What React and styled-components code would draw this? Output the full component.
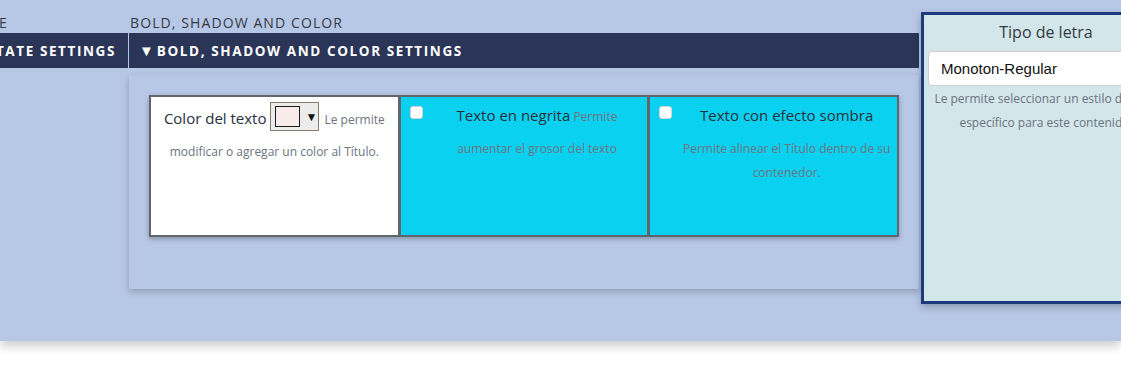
import React from "react";
import styled, { createGlobalStyle } from "styled-components";

const Global = createGlobalStyle`
  html, body { margin: 0; padding: 0; background: #ffffff; }
  body { font-family: "Open Sans", "Noto Sans", sans-serif; color: #2b313b; }
  * { box-sizing: border-box; }
`;

const Page = styled.div`
  padding-bottom: 32px;
`;

const Stage = styled.div`
  height: 341px;
  background: #b7c8e6;
  box-shadow: 0 5px 10px rgba(0, 0, 0, 0.2);
  overflow: hidden;
  display: flex;
  align-items: flex-start;
  gap: 1px;
`;

const Slide = styled.section`
  flex: 0 0 ${(p) => p.$width}px;
  width: ${(p) => p.$width}px;
  padding-top: 13px;
  display: flex;
  flex-direction: column;
`;

const SlideLabel = styled.div`
  height: 20px;
  line-height: 20px;
  font-size: 14px;
  letter-spacing: 1.1px;
  color: #343a44;
  white-space: nowrap;
  display: flex;
  justify-content: ${(p) => (p.$edge === "end" ? "flex-end" : "flex-start")};
  padding: ${(p) => (p.$edge === "end" ? "0 120px 0 0" : "0 0 0 1px")};
`;

const Bar = styled.div`
  height: 35px;
  background: #2a3558;
  color: #ffffff;
  display: flex;
  align-items: center;
  justify-content: ${(p) => (p.$edge === "end" ? "flex-end" : "flex-start")};
  padding: ${(p) => (p.$edge === "end" ? "0 12px 0 0" : "0 0 0 10px")};
  font-size: 13.5px;
  font-weight: 700;
  letter-spacing: 1.6px;
  white-space: nowrap;
  overflow: hidden;
`;

const Caret = styled.span`
  font-size: 15px;
  margin-right: 3px;
  letter-spacing: 0;
  line-height: 1;
`;

const Panel = styled.div`
  margin-top: 7px;
  height: 214px;
  padding: 20px;
  background: #b7c8e6;
  box-shadow: 0 3px 7px rgba(0, 0, 0, 0.22);
`;

const Row = styled.div`
  display: grid;
  grid-template-columns: repeat(3, 1fr);
  gap: 3px;
  padding: 2px;
  height: 142px;
  background: #60656f;
  box-shadow: 0 2px 5px rgba(0, 0, 0, 0.28);
`;

const Cell = styled.div`
  background: ${(p) => p.$bg};
  display: flex;
  align-items: flex-start;
  padding: ${(p) => (p.$check ? "9px 0 0 9px" : "5px 0 0 0")};
`;

const Check = styled.input.attrs({ type: "checkbox" })`
  appearance: none;
  flex: 0 0 13px;
  width: 13px;
  height: 13px;
  margin: 0 4px 0 0;
  background: #ffffff;
  border: 1px solid #d4d4d4;
  border-radius: 3px;
`;

const Text = styled.p`
  flex: 1;
  margin: ${(p) => (p.$check ? "-3px 0 0" : "0")};
  padding: ${(p) => (p.$check ? "0 4px" : "0")};
  text-align: center;
  line-height: 24px;
  font-size: 12px;
`;

const Title = styled.span`
  display: inline-block;
  font-size: 15px;
  line-height: 24px;
  margin-bottom: 10px;
  color: #27303b;
`;

const Desc = styled.span`
  font-size: 12px;
  color: #6b7480;
`;

const Picker = styled.span`
  display: inline-flex;
  align-items: center;
  vertical-align: middle;
  width: 49px;
  height: 29px;
  margin: 0 5px 8px 4px;
  padding: 0 0 0 4px;
  background: #ececec;
  border: 1px solid #8c7b6b;
  gap: 5px;
`;

const Swatch = styled.span`
  width: 25px;
  height: 21px;
  background: #f8ecea;
  border: 1px solid #1d1d1d;
`;

const PickerArrow = styled.span`
  font-size: 12px;
  color: #111;
  line-height: 1;
`;

const Side = styled.aside`
  flex: 0 0 250px;
  margin: 12px 0 0 1px;
  height: 292px;
  background: #d3e6ea;
  border: 3px solid #1c3a7c;
  box-shadow: 0 3px 7px rgba(0, 0, 0, 0.25);
  padding: 5px 4px 0 4px;
  text-align: center;
`;

const SideTitle = styled.div`
  font-size: 16px;
  line-height: 24px;
  color: #333a44;
`;

const SelectBox = styled.div`
  margin: 7px 0 0 0;
  height: 35px;
  background: #ffffff;
  border: 1px solid #cfcfcf;
  border-radius: 4px;
  display: flex;
  align-items: center;
  padding-left: 12px;
  font-family: "Liberation Sans", Arial, sans-serif;
  font-size: 15px;
  color: #111;
  text-align: left;
`;

const SideDesc = styled.p`
  margin: 1px 0 0;
  font-size: 12px;
  line-height: 24px;
  color: #6b7480;
`;

export default function App() {
  return (
    <Page>
      <Global />
      <Stage>
        <Slide $width={128}>
          <SlideLabel $edge="end">TEXT ALIGN AND STATE</SlideLabel>
          <Bar $edge="end">
            <Caret>▼</Caret>TEXT ALIGN AND STATE SETTINGS
          </Bar>
        </Slide>
        <Slide $width={790}>
          <SlideLabel>BOLD, SHADOW AND COLOR</SlideLabel>
          <Bar>
            <Caret>▼</Caret>BOLD, SHADOW AND COLOR SETTINGS
          </Bar>
          <Panel>
            <Row>
              <Cell $bg="#ffffff">
                <Text>
                  <Title>Color del texto</Title>
                  <Picker>
                    <Swatch />
                    <PickerArrow>▼</PickerArrow>
                  </Picker>
                  <Desc>Le permite modificar o agregar un color al Título.</Desc>
                </Text>
              </Cell>
              <Cell $bg="#0bd1f0" $check>
                <Check />
                <Text $check>
                  <Title>Texto en negrita</Title> <Desc>Permite aumentar el grosor del texto</Desc>
                </Text>
              </Cell>
              <Cell $bg="#0bd1f0" $check>
                <Check />
                <Text $check>
                  <Title>Texto con efecto sombra</Title>{" "}
                  <Desc>Permite alinear el Título dentro de su contenedor.</Desc>
                </Text>
              </Cell>
            </Row>
          </Panel>
        </Slide>
        <Side>
          <SideTitle>Tipo de letra</SideTitle>
          <SelectBox>Monoton-Regular</SelectBox>
          <SideDesc>Le permite seleccionar un estilo de letra específico para este contenido.</SideDesc>
        </Side>
      </Stage>
    </Page>
  );
}
